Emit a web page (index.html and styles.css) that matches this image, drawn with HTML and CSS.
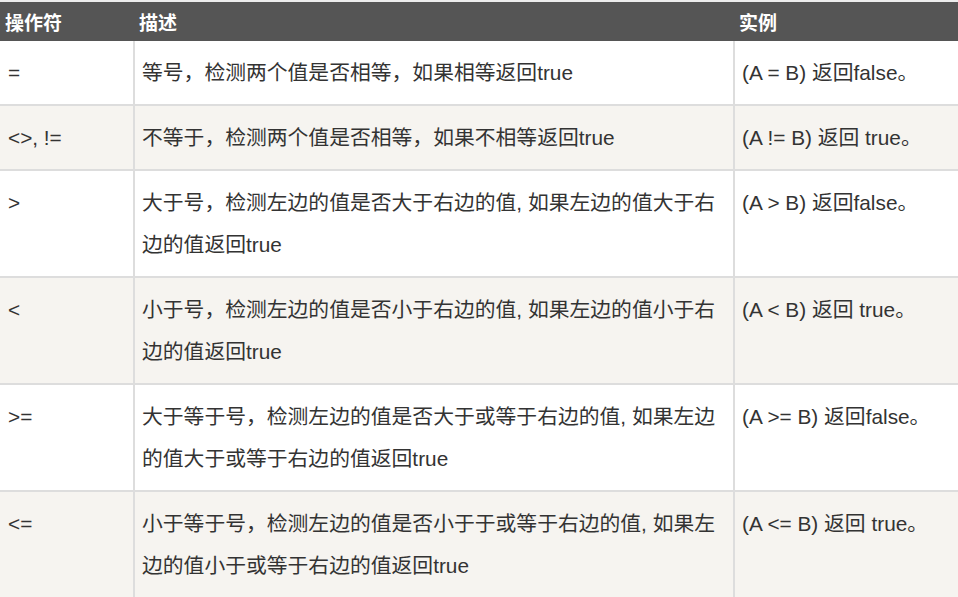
FILE: index.html
```html
<!DOCTYPE html>
<html lang="zh">
<head>
<meta charset="utf-8">
<link rel="stylesheet" href="styles.css">
</head>
<body>
<div class="wrap">
<table class="ops">
  <colgroup><col class="c1"><col class="c2"><col class="c3"></colgroup>
  <thead>
    <tr><th>操作符</th><th>描述</th><th>实例</th></tr>
  </thead>
  <tbody>
    <tr><td>=</td><td>等号，检测两个值是否相等，如果相等返回true</td><td>(A = B) 返回false。</td></tr>
    <tr><td>&lt;&gt;, !=</td><td>不等于，检测两个值是否相等，如果不相等返回true</td><td>(A != B) 返回 true。</td></tr>
    <tr><td>&gt;</td><td>大于号，检测左边的值是否大于右边的值, 如果左边的值大于右边的值返回true</td><td>(A &gt; B) 返回false。</td></tr>
    <tr><td>&lt;</td><td>小于号，检测左边的值是否小于右边的值, 如果左边的值小于右边的值返回true</td><td>(A &lt; B) 返回 true。</td></tr>
    <tr><td>&gt;=</td><td>大于等于号，检测左边的值是否大于或等于右边的值, 如果左边的值大于或等于右边的值返回true</td><td>(A &gt;= B) 返回false。</td></tr>
    <tr><td>&lt;=</td><td>小于等于号，检测左边的值是否小于于或等于右边的值, 如果左边的值小于或等于右边的值返回true</td><td>(A &lt;= B) 返回 true。</td></tr>
  </tbody>
</table>
</div>
</body>
</html>
```

FILE: styles.css
```css
html, body {
  margin: 0;
  padding: 0;
  background: #ffffff;
  overflow: hidden;
}
.wrap {
  padding-top: 2px;
  background: #ececec;
  width: 958px;
}
.ops {
  width: 958px;
  border-collapse: collapse;
  table-layout: fixed;
  font-family: "Liberation Sans", "Noto Sans CJK SC", sans-serif;
  color: #333333;
}
.c1 { width: 134px; }
.c2 { width: 600px; }
.c3 { width: 224px; }
.ops th {
  background: #555555;
  color: #ffffff;
  font-family: "Noto Sans CJK SC", sans-serif;
  font-weight: bold;
  font-size: 19px;
  text-align: left;
  height: 39px;
  padding: 0 5px;
  line-height: 39px;
  box-sizing: border-box;
}
.ops td {
  font-size: 20.8px;
  line-height: 42px;
  padding: 11px 6px 10px 7px;
  vertical-align: top;
  border: 2px solid #dddddd;
  border-top: none;
  background: #ffffff;
}
.ops td:first-child { border-left: none; padding-left: 8px; }
.ops td:last-child { border-right: none; }
.ops tbody tr:nth-child(even) td { background: #f6f4f0; }
```
